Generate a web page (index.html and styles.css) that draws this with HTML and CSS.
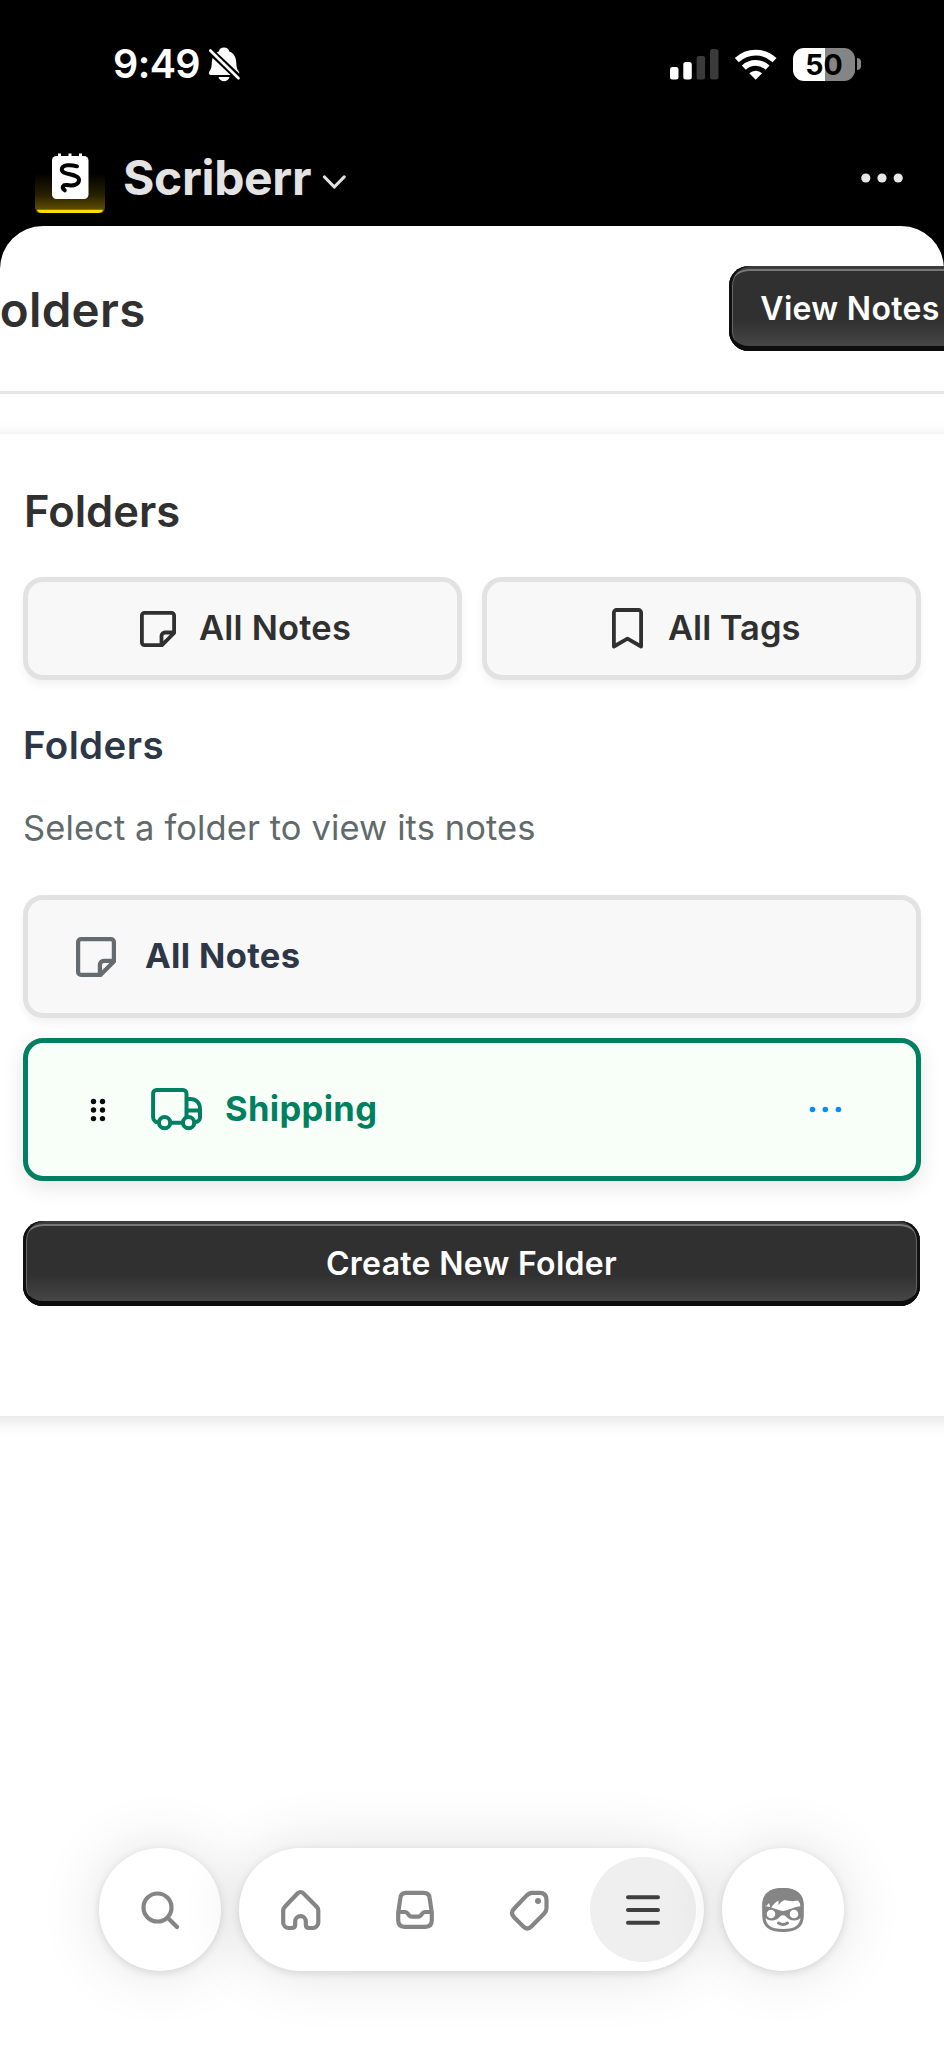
FILE: index.html
```html
<!DOCTYPE html>
<html lang="en">
<head>
<meta charset="utf-8">
<title>Scriberr</title>
<link rel="stylesheet" href="styles.css">
</head>
<body>
<div class="screen">
  <div class="statusbar">
    <span class="time">9:49</span>
    <svg class="bell" width="34" height="36" viewBox="207 46 34 36">
      <path d="M224 47.500c-2.800 0-4.700 1.600-5.200 4-5 1.900-6.800 6-7 11.500-.2 4.500-.8 6.200-2.300 8.200-1.300 1.800-.6 3.800 1.800 3.800h25.500c2.400 0 3.100-2 1.800-3.800-1.500-2-2.100-3.700-2.300-8.200-.2-5.500-2-9.600-7-11.500-.5-2.400-2.500-4-5.300-4z" fill="#fff"/>
      <path d="M218.500 77h11c-.6 2.700-2.700 4.200-5.500 4.200s-4.900-1.500-5.500-4.200z" fill="#fff"/>
      <path d="M207.500 48.500l34 32" stroke="#000" stroke-width="7"/>
      <path d="M210.300 50.500l28.200 27.800" stroke="#fff" stroke-width="2.700" stroke-linecap="round"/>
    </svg>
    <svg class="signal" width="50" height="32" viewBox="669 47 50 32">
      <rect x="670" y="66" width="8.500" height="12.500" rx="2.500" fill="#fff"/>
      <rect x="683.300" y="61" width="8.500" height="17.500" rx="2.500" fill="#fff"/>
      <rect x="696.600" y="55" width="8.500" height="23.500" rx="2.500" fill="#3a3a3a"/>
      <rect x="710" y="48" width="8.500" height="30.500" rx="2.500" fill="#3a3a3a"/>
    </svg>
    <svg class="wifi" width="44" height="33" viewBox="734 47 44 33">
      <path d="M755.700 78.800l-6.400-6.500a9.300 9.300 0 0 1 12.800 0z" fill="#fff"/>
      <path d="M743.800 66.700a17.300 17.300 0 0 1 23.800 0M736.800 59.200a27.500 27.500 0 0 1 37.800 0" fill="none" stroke="#fff" stroke-width="5.800"/>
    </svg>
    <div class="battery"><span>50</span></div>
    <i class="battery-nub"></i>
  </div>

  <div class="appbar">
    <svg class="logo" width="70" height="62" viewBox="35 152 70 62">
      <defs>
        <linearGradient id="glow" x1="0" y1="0" x2="0" y2="1">
          <stop offset=".35" stop-color="#000"/><stop offset=".7" stop-color="#261f00"/><stop offset="1" stop-color="#6b5a00"/>
        </linearGradient>
      </defs>
      <path d="M35 152h70v54q0 6-4 7H39q-4-1-4-7z" fill="url(#glow)"/>
      <path d="M37 209.800h66q-1 3.200-5 3.200H42q-4 0-5-3.200z" fill="#ffdc00"/>
      <path d="M59.500 153.500v4M70 153.500v4M80.500 153.500v4" stroke="#fff" stroke-width="3"/>
      <rect x="52" y="156" width="36.500" height="43" rx="4.500" fill="#fff"/>
      <path d="M77 166.300c-6-1.700-15-2-15.200 3.300-.1 5.700 17 3.700 17.200 10.200.1 6-8 6-12 5.200-4-.6-6 2.300-2.200 5.300" fill="none" stroke="#000" stroke-width="4" stroke-linecap="round"/>
    </svg>
    <span class="appname">Scriberr</span>
    <svg class="chev" width="24" height="16" viewBox="322 174 24 16"><path d="M324.500 177l9.800 10 9.800-10" fill="none" stroke="#e3e3e3" stroke-width="3.200" stroke-linecap="round" stroke-linejoin="round"/></svg>
    <svg class="more" width="42" height="10" viewBox="861.500 173 42 10" fill="#e8e8e8"><circle cx="866.300" cy="178" r="4.600"/><circle cx="882.500" cy="178" r="4.600"/><circle cx="898.700" cy="178" r="4.600"/></svg>
  </div>

  <main class="sheet">
    <header class="pagehead">
      <h1>Folders</h1>
      <button class="dark view">View Notes</button>
    </header>
    <section class="card">
      <h2>Folders</h2>
      <div class="tabs">
        <button class="box tab tab-notes">
          <svg width="36" height="36" viewBox="0 0 36 36"><path d="M4.500 1.900h27a2.600 2.600 0 0 1 2.600 2.600V22L22 34.100H4.500a2.600 2.600 0 0 1-2.600-2.600v-27a2.600 2.600 0 0 1 2.600-2.600zM21.500 34V25a3.500 3.500 0 0 1 3.500-3.500h9" fill="none" stroke="#303030" stroke-width="3.800" stroke-linejoin="round"/></svg>
          <span>All Notes</span>
        </button>
        <button class="box tab tab-tags">
          <svg width="31" height="41" viewBox="0 0 31 41"><path d="M4.500 2h22a2.600 2.600 0 0 1 2.600 2.600V38.500L15.500 30.700 1.900 38.500V4.600A2.600 2.600 0 0 1 4.500 2z" fill="none" stroke="#303030" stroke-width="3.800" stroke-linejoin="round"/></svg>
          <span>All Tags</span>
        </button>
      </div>
      <h3>Folders</h3>
      <p class="hint">Select a folder to view its notes</p>
      <div class="box row">
        <svg width="40" height="40" viewBox="0 0 36 36"><path d="M4.500 1.900h27a2.600 2.600 0 0 1 2.600 2.600V22L22 34.100H4.500a2.600 2.600 0 0 1-2.600-2.600v-27a2.600 2.600 0 0 1 2.600-2.600zM21.500 34V25a3.500 3.500 0 0 1 3.500-3.500h9" fill="none" stroke="#656c70" stroke-width="3.800" stroke-linejoin="round"/></svg>
        <span>All Notes</span>
      </div>
      <div class="box row selected">
        <svg class="grip" width="16" height="24" viewBox="0 0 16 24"><g fill="#0a0a0a"><circle cx="3.500" cy="3.500" r="2.700"/><circle cx="12.500" cy="3.500" r="2.700"/><circle cx="3.500" cy="12" r="2.700"/><circle cx="12.500" cy="12" r="2.700"/><circle cx="3.500" cy="20.600" r="2.700"/><circle cx="12.500" cy="20.600" r="2.700"/></g></svg>
        <svg class="truck" width="52" height="43" viewBox="151 1088 52 43"><g fill="none" stroke="#008060" stroke-width="4" stroke-linejoin="round"><path d="M158.500 1122.500a5.500 5.500 0 0 1-5.400-5.500v-23.500a3.500 3.500 0 0 1 3.500-3.500h26.400a3.500 3.500 0 0 1 3.500 3.500v23.500M170.500 1122.700h12M186.500 1099h3.500c6 0 10 4 10 10v8.500a4.500 4.500 0 0 1-4.500 4.500M186.500 1110.500h13.500"/><circle cx="164.600" cy="1122.700" r="5.600"/><circle cx="188.600" cy="1122.700" r="5.600"/></g></svg>
        <span>Shipping</span>
        <svg class="rowmore" width="33" height="7" viewBox="0 0 33 7" fill="#058cff"><circle cx="3.500" cy="3.500" r="2.800"/><circle cx="16.300" cy="3.500" r="2.800"/><circle cx="29.400" cy="3.500" r="2.800"/></svg>
      </div>
      <button class="dark create">Create New Folder</button>
    </section>
  </main>

  <nav class="dock">
    <a class="bubble"><svg width="40" height="40" viewBox="0 0 40 40"><g fill="none" stroke="#858585" stroke-width="4.200" stroke-linecap="round"><circle cx="17.500" cy="17.500" r="14"/><path d="M28 28l9 9"/></g></svg></a>
    <div class="pill">
      <a><svg width="40" height="42" viewBox="281 1888 40 42"><path d="M297.700 1892.200a4 4 0 0 1 5.600 0l13.400 13.500q1.600 1.600 1.600 4v11.800a5.500 5.500 0 0 1-5.500 5.500h-3.500q-3.500 0-3.500-3.500v-3a5.300 5.300 0 0 0-10.600 0v3q0 3.500-3.500 3.500h-3a5.500 5.500 0 0 1-5.500-5.500v-11.800q0-2.400 1.600-4z" fill="none" stroke="#858585" stroke-width="4.200" stroke-linejoin="round"/></svg></a>
      <a><svg width="40" height="40" viewBox="395 1890 40 40"><path d="M406 1892.800h18q5 0 5.600 5l2.200 15v7.500q0 6.500-6.500 6.500h-20.600q-6.500 0-6.500-6.500v-7.500l2.200-15q.6-5 5.600-5zM398.500 1912h6.700c3.200 0 2.800 4.700 6.500 4.700h6.600c3.700 0 3.300-4.700 6.500-4.700h7" fill="none" stroke="#858585" stroke-width="4.200"/></svg></a>
      <a><svg width="42" height="42" viewBox="508 1889 42 42"><path d="M532 1892.800h7.500q7 0 7 7v8.500q0 3-2.500 5.500l-12.700 12.800q-4 4-8 0l-9.300-9.400q-3.800-4-.4-8l12.400-13q3-3.400 6-3.400z" fill="none" stroke="#858585" stroke-width="4.200"/><circle cx="538" cy="1901" r="3" fill="#858585"/></svg></a>
      <a class="active"><svg width="36" height="32" viewBox="0 0 36 32"><path d="M3 3.200h30M3 16h30M3 28.800h30" stroke="#404040" stroke-width="4" stroke-linecap="round"/></svg></a>
    </div>
    <a class="bubble"><svg width="44" height="46" viewBox="762 1887 44 46">
      <path d="M784 1889.500c-13 0-19.200 5-19.200 16v10c0 10.500 6 15 19.200 15s19.200-4.500 19.200-15v-10c0-11-6.200-16-19.200-16z" fill="none" stroke="#858585" stroke-width="3.200"/>
      <path d="M763.500 1906c-.5-12 7-18 20.500-18s21 7 20.500 18h-3c-.5-3-1.500-4.500-3-5.500-5 1.200-9 .6-13-.5q-3 1-6 5v-4.500q-4 2-8 8l-1.500-5.500-3 3.500-2-4-2.500 4z" fill="#858585"/>
      <path fill-rule="evenodd" d="M764 1906c8 0 13 4 20 5 7-1 12-5 20-5l-.5 10c-5 7-13 5-16.500.5q-3-2.500-6 0c-3.500 4.500-11.500 6.500-16.500-.5zM772 1909.700a4.300 4.300 0 1 0 0 8.600 4.300 4.300 0 0 0 0-8.600zM795 1909.700a4.300 4.300 0 1 0 0 8.600 4.300 4.300 0 0 0 0-8.600z" fill="#858585"/>
      <path d="M779.500 1923q4.500 3 9 0" fill="none" stroke="#858585" stroke-width="3" stroke-linecap="round"/>
    </svg></a>
  </nav>
</div>
</body>
</html>
```
FILE: styles.css
```css
* { box-sizing: border-box; }
body { margin: 0; background: #000; font-family: Inter, "Liberation Sans", sans-serif; }
svg { display: block; flex: none; }
h1, h2, h3, p { margin: 0; font-weight: 600; white-space: nowrap; }
button { font-family: inherit; margin: 0; padding: 0; white-space: nowrap; }
.screen { width: 944px; height: 2046px; overflow: hidden; position: relative; background: #000; display: flex; flex-direction: column; }

.statusbar { height: 128px; flex: none; display: flex; align-items: center; padding-left: 113px; color: #fff; }
.time { width: 94px; font-size: 39.5px; font-weight: 600; line-height: 48px; letter-spacing: -0.6px; }
.signal { margin-left: 428px; }
.wifi { margin-left: 15px; }
.battery { margin-left: 15px; width: 62px; height: 33px; border-radius: 11px; background: linear-gradient(90deg, #fff 32px, #858585 32px); color: #000; font-size: 28.5px; font-weight: 700; line-height: 33px; text-align: center; }
.battery-nub { width: 4px; height: 12px; margin-left: 2px; border-radius: 0 6px 6px 0; background: #858585; }

.appbar { height: 98px; flex: none; display: flex; align-items: flex-start; padding: 24px 0 0 35px; }
.appname { margin-left: 18px; width: 199px; font-size: 48px; line-height: 52px; font-weight: 700; letter-spacing: -0.35px; color: #e3e3e3; }
.chev { margin-top: 22px; }
.more { margin: 21px 0 0 515px; }

.sheet { flex: 1; background: #fff; border-radius: 43px 43px 0 0; }
.pagehead { height: 168px; display: flex; align-items: flex-start; border-bottom: 3px solid #e6e6e6; }
.pagehead h1 { flex: none; margin: 56px 0 0 -27px; width: 756px; font-size: 47.5px; line-height: 56px; letter-spacing: 0.3px; color: #303030; }
.dark { border: 0; border-radius: 20px; height: 85px; color: #fff; font-size: 32px; font-weight: 600; letter-spacing: 0.3px;
  background: linear-gradient(#303030 63%, #4a4a4a);
  box-shadow: inset 0 -5px 0 #0c0c0c, inset 3px 0 0 #111, inset -3px 0 0 #111, inset 0 3px 0 #3c3c3c, inset 0 5px 0 #777, inset 4px 0 0 #666, inset -4px 0 0 #666; }
.view { flex: none; width: 242px; margin-top: 40px; }
.card { margin: 40px -30px 0; height: 982px; padding: 51px 53px 0; background: #fff; box-shadow: 0 4px 18px rgba(0,0,0,.12); }
.card h2 { padding-left: 1px; font-size: 43.5px; line-height: 52px; color: #303030; }
.tabs { margin-top: 40px; display: grid; grid-template-columns: 439px 439px; gap: 20px; }
.box { border: 5px solid #e2e2e2; border-radius: 20px; background: #f8f8f8; box-shadow: 0 5px 8px rgba(0,0,0,.05); display: flex; align-items: center; }
.box span { padding-bottom: 2px; }
.tab { height: 103px; color: #303030; font-size: 34.5px; font-weight: 600; }
.tab-notes { padding-left: 112px; gap: 23px; letter-spacing: 0.2px; }
.tab-tags { padding-left: 125px; gap: 25px; }
h3 { margin-top: 42px; padding-left: 0; font-size: 38.5px; line-height: 46px; letter-spacing: 0.4px; color: #2d3748; }
.hint { margin-top: 39px; font-size: 34.5px; line-height: 42px; font-weight: 400; letter-spacing: 0.1px; color: #616a6a; }
.row { margin-top: 46px; height: 123px; padding-left: 48px; color: #2d3748; font-size: 34.5px; font-weight: 700; letter-spacing: 0.35px; }
.row span { margin-left: 29px; }
.selected { margin-top: 20px; height: 143px; padding-left: 62px; color: #008060; border-color: #008060; background: #f8fff8; box-shadow: 0 6px 22px rgba(0,0,0,.1); }
.selected .truck { margin-left: 45px; }
.selected span { margin-left: 22px; width: 584px; }
.create { margin-top: 40px; width: 897px; display: block; }

.dock { position: absolute; left: 99px; top: 1848px; display: flex; gap: 18px; }
.dock a { display: flex; align-items: center; justify-content: center; }
.bubble, .pill { height: 123px; border-radius: 62px; background: #fff; box-shadow: 0 0 64px rgba(0,0,0,.12), 0 2px 8px rgba(0,0,0,.12); }
.bubble { width: 122px; }
.pill { width: 465px; display: flex; align-items: center; padding-left: 9px; gap: 8px; }
.pill a { width: 106px; height: 105px; border-radius: 53px; }
.pill .active { background: #efefef; }
```
